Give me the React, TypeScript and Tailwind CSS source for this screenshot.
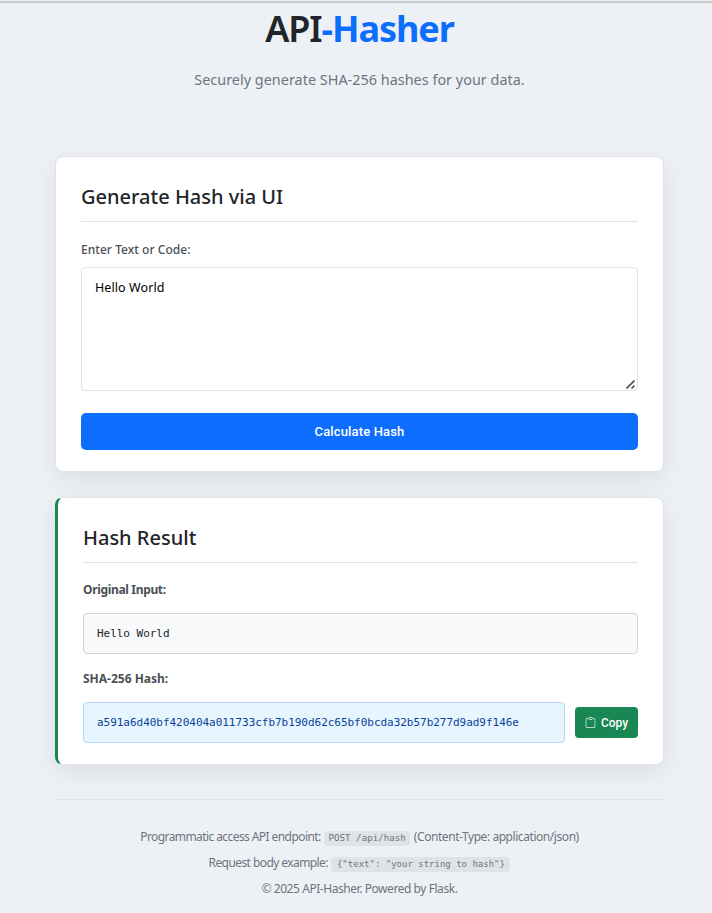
import type { ReactNode } from "react";

function ClipboardIcon() {
  return (
    <svg className="h-[11px] w-[11px] shrink-0 opacity-90" viewBox="0 0 16 16" fill="currentColor">
      <path d="M4 1.5H3a2 2 0 0 0-2 2V14a2 2 0 0 0 2 2h10a2 2 0 0 0 2-2V3.500a2 2 0 0 0-2-2h-1v1h1a1 1 0 0 1 1 1V14a1 1 0 0 1-1 1H3a1 1 0 0 1-1-1V3.500a1 1 0 0 1 1-1h1z" />
      <path d="M9.500 1a.5.5 0 0 1 .5.5v1a.5.5 0 0 1-.5.5h-3a.5.5 0 0 1-.5-.5v-1a.5.5 0 0 1 .5-.5zm-3-1A1.500 1.500 0 0 0 5 1.500v1A1.500 1.500 0 0 0 6.500 4h3A1.500 1.500 0 0 0 11 2.500v-1A1.500 1.500 0 0 0 9.500 0z" />
    </svg>
  );
}

function Code({ className, children }: { className: string; children: ReactNode }) {
  return (
    <code
      className={`inline-flex h-[15px] items-center justify-center rounded-[4px] bg-[#dfe3e8] font-['DejaVu_Sans_Mono',monospace] ${className}`}
    >
      {children}
    </code>
  );
}

export default function App() {
  return (
    <div className="h-[913px] w-[712px] overflow-hidden bg-[#edf1f6] font-['Noto_Sans',sans-serif] text-[#212529]">
      <div className="mt-px h-[2px] bg-[#cccccc]" />
      <div className="ml-[55px] flex w-[609px] flex-col">
        <header className="flex h-[153px] flex-col items-center whitespace-nowrap">
          <h1 className="mt-[2px] h-[48px] text-[36px] leading-[48px] font-semibold tracking-[-1.1px]">
            API<span className="font-bold tracking-[-1.05px] text-[#0d6efd]">-Hasher</span>
          </h1>
          <p className="mt-[16px] text-[14.4px] leading-[22px] tracking-[0.02px] text-[#6c757d]">
            Securely generate SHA-256 hashes for your data.
          </p>
        </header>

        <section className="flex h-[316px] flex-col rounded-[8px] border border-[#dee2e6] bg-white px-[25px] shadow-[0_7px_25px_rgba(0,0,0,0.08)]">
          <h2 className="h-[65px] shrink-0 border-b border-[#dee2e6] pt-[24px] text-[20px] leading-[32px] font-medium whitespace-nowrap">
            Generate Hash via UI
          </h2>
          <label className="mt-[18px] h-[27px] text-[12px] leading-[20px] font-medium tracking-[0.04px] text-[#495057]">
            Enter Text or Code:
          </label>
          <div className="relative h-[124px] shrink-0">
            <textarea
              className="block h-full w-full resize-none rounded-[4px] border border-[#dee2e6] bg-white px-[13px] py-[10px] text-[12.500px] leading-[20px] tracking-[0.08px] text-black outline-none"
              defaultValue="Hello World"
            />
            <svg
              className="absolute right-[3px] bottom-[2px] h-[9px] w-[9px]"
              viewBox="0 0 9 9"
              fill="none"
              stroke="#4d4d4d"
              strokeWidth="1.6"
            >
              <path d="M.5 8.500 8.500.5M5.500 8.500l3-3" />
            </svg>
          </div>
          <button className="mt-[22px] h-[37px] w-full shrink-0 rounded-[5px] bg-[#0d6efd] font-[Roboto,sans-serif] text-[13px] font-medium tracking-[0.15px] text-white">
            Calculate Hash
          </button>
        </section>

        <section className="mt-[25px] flex h-[268px] flex-col rounded-[8px] border border-l-[3px] border-[#dee2e6] border-l-[#198754] bg-white px-[25px] shadow-[0_7px_25px_rgba(0,0,0,0.08)]">
          <h2 className="h-[65px] shrink-0 border-b border-[#dee2e6] pt-[24px] text-[20px] leading-[32px] font-medium">
            Hash Result
          </h2>
          <h3 className="mt-[17px] h-[33px] text-[12px] leading-[20px] font-bold tracking-[-0.33px] text-[#495057]">
            Original Input:
          </h3>
          <pre className="flex h-[41px] shrink-0 items-center rounded-[4px] border border-[#ced4da] bg-[#f8f9fa] px-[13px] pt-px font-['DejaVu_Sans_Mono',monospace] text-[11px] tracking-[-0.03px]">
            Hello World
          </pre>
          <h3 className="mt-[15px] h-[33px] text-[12px] leading-[20px] font-bold text-[#495057]">
            SHA-256 Hash:
          </h3>
          <div className="flex items-center justify-between">
            <pre className="flex h-[41px] w-[482px] items-center rounded-[4px] border border-[#b6d4fe] bg-[#e7f5ff] px-[13px] pt-px font-['DejaVu_Sans_Mono',monospace] text-[11px] tracking-[-0.03px] text-[#084298]">
              a591a6d40bf420404a011733cfb7b190d62c65bf0bcda32b57b277d9ad9f146e
            </pre>
            <button className="flex h-[31px] w-[63px] items-center justify-center gap-[5px] rounded-[4px] bg-[#198754] font-[Roboto,sans-serif] text-[12px] font-medium text-white">
              <ClipboardIcon />
              Copy
            </button>
          </div>
        </section>

        <footer className="mt-[34px] flex flex-col items-center border-t border-[#dee2e6] pt-[24px] text-[12px] leading-[26px] tracking-[-0.44px] whitespace-nowrap text-[#6c757d]">
          <p className="h-[26px]">
            <span className="tracking-[-0.58px]">Programmatic access API endpoint: </span>
            <Code className="ml-px w-[86px] text-[9.200px] tracking-normal">POST /api/hash</Code>{" "}
            <span className="ml-px">(Content-Type: application/json)</span>
          </p>
          <p className="h-[26px]">
            <span className="tracking-[-0.58px]">Request body example: </span>
            <Code className="ml-px w-[179px] text-[9px] tracking-normal">{'{"text": "your string to hash"}'}</Code>
          </p>
          <p className="h-[26px]">© 2025 API-Hasher. Powered by Flask.</p>
        </footer>
      </div>
    </div>
  );
}
